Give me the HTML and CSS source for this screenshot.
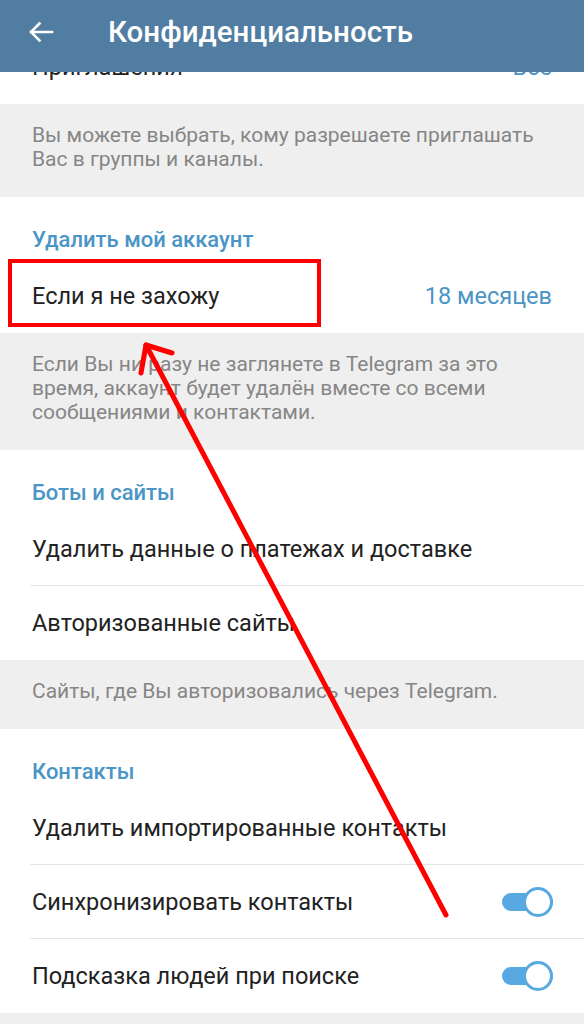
FILE: index.html
```html
<!DOCTYPE html>
<html lang="ru">
<head>
<meta charset="utf-8">
<title>Конфиденциальность</title>
<link rel="stylesheet" href="styles.css">
</head>
<body>
<header class="appbar">
  <svg class="back" width="26" height="22" viewBox="0 0 26 22">
    <path d="M3 11 H24 M3 11 L11.5 2.5 M3 11 L11.5 19.5" fill="none" stroke="#fff" stroke-width="2.6" stroke-linecap="square"/>
  </svg>
  <h1 class="title">Конфиденциальность</h1>
</header>

<main class="page">
  <section class="card">
    <div class="row"><span class="label">Приглашения</span><span class="value">Все</span></div>
  </section>
  <p class="info">Вы можете выбрать, кому разрешаете приглашать Вас в группы и каналы.</p>

  <section class="card">
    <h2 class="section-title">Удалить мой аккаунт</h2>
    <div class="row"><span class="label">Если я не захожу</span><span class="value">18 месяцев</span></div>
  </section>
  <p class="info">Если Вы ни разу не заглянете в Telegram за это время, аккаунт будет удалён вместе со всеми сообщениями и контактами.</p>

  <section class="card">
    <h2 class="section-title">Боты и сайты</h2>
    <div class="row divided"><span class="label">Удалить данные о платежах и доставке</span></div>
    <div class="row"><span class="label">Авторизованные сайты</span></div>
  </section>
  <p class="info">Сайты, где Вы авторизовались через Telegram.</p>

  <section class="card">
    <h2 class="section-title">Контакты</h2>
    <div class="row divided"><span class="label">Удалить импортированные контакты</span></div>
    <div class="row divided"><span class="label">Синхронизировать контакты</span><span class="toggle"><span class="knob"></span></span></div>
    <div class="row"><span class="label">Подсказка людей при поиске</span><span class="toggle"><span class="knob"></span></span></div>
  </section>
  <div class="tail"></div>
</main>

<div class="highlight"></div>
<svg class="pointer" width="584" height="1024" viewBox="0 0 584 1024">
  <g fill="none" stroke="#ff0000" stroke-width="5" stroke-linecap="round" stroke-linejoin="round">
    <path d="M446 915 L146 345"/>
    <path d="M172 353 L146 345 L141 373"/>
  </g>
</svg>
</body>
</html>
```

FILE: styles.css
```css
html, body {
  margin: 0;
  padding: 0;
}
body {
  width: 584px;
  height: 1024px;
  overflow: hidden;
  background: #efefef;
  font-family: Roboto, "Noto Sans", "Liberation Sans", sans-serif;
  position: relative;
}
.appbar {
  position: fixed;
  top: 0;
  left: 0;
  width: 584px;
  height: 72px;
  background: #517da2;
  display: flex;
  align-items: center;
  z-index: 5;
  box-sizing: border-box;
  padding: 0 0 8px 28px;
}
.back {
  display: block;
  flex: none;
}
.title {
  margin: 0 0 0 54px;
  color: #fff;
  font-size: 29.5px;
  font-weight: 500;
  letter-spacing: 0;
}
.page {
  padding-top: 30px;
}
.card {
  background: #fff;
}
.section-title {
  margin: 0;
  height: 62px;
  box-sizing: border-box;
  padding: 31px 32px 0;
  font-size: 22px;
  line-height: 24px;
  font-weight: 500;
  color: #4a95c6;
}
.row {
  height: 74px;
  box-sizing: border-box;
  padding: 0 32px;
  display: flex;
  align-items: center;
  justify-content: space-between;
  position: relative;
}
.row.divided::after {
  content: "";
  position: absolute;
  left: 30px;
  right: 0;
  bottom: 0;
  height: 1px;
  background: #e4e4e4;
}
.label {
  font-size: 23.5px;
  color: #222;
}
.value {
  font-size: 23.5px;
  color: #4a95c6;
}
.info {
  margin: 0;
  padding: 19px 32px 26px;
  font-size: 21px;
  line-height: 24px;
  color: #868686;
}
.toggle {
  position: relative;
  width: 51px;
  height: 18px;
  border-radius: 9px;
  background: #58a9e1;
  margin-right: -1px;
}
.knob {
  position: absolute;
  right: 0;
  top: -6px;
  width: 30px;
  height: 30px;
  box-sizing: border-box;
  border-radius: 50%;
  background: #fff;
  border: 3px solid #58a9e1;
}
.tail {
  height: 20px;
}
.highlight {
  position: absolute;
  left: 8px;
  top: 259px;
  width: 313px;
  height: 68px;
  box-sizing: border-box;
  border: 4px solid #ff0000;
  z-index: 3;
}
.pointer {
  position: absolute;
  left: 0;
  top: 0;
  z-index: 4;
}
```
